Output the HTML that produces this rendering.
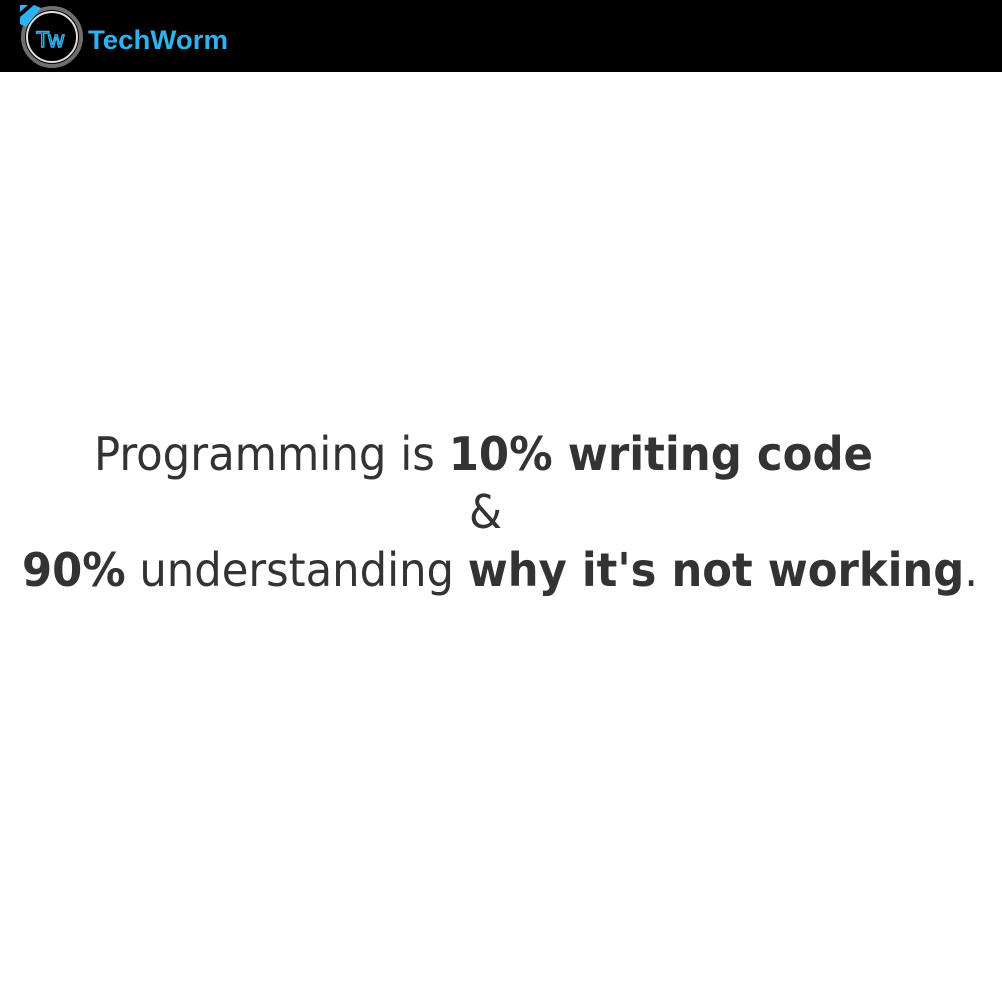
<!DOCTYPE html>
<html><head><meta charset="utf-8"><style>
html,body{margin:0;padding:0;background:#fff;width:1002px;height:1000px;overflow:hidden}
.hdr{position:absolute;left:0;top:0;width:1002px;height:72px;background:#000}
</style></head><body>
<div class="hdr">
<svg width="240" height="72" viewBox="0 0 240 72">
  <circle cx="52" cy="37" r="29" fill="none" stroke="#6f6f6f" stroke-width="4"/>
  <circle cx="52" cy="37" r="25" fill="none" stroke="#e0e0e0" stroke-width="2"/>
  <path d="M20 5 L28 5 L20 12 Z" fill="#2db4f0"/>
  <path d="M20 17 L34 5 L41 8 L26 27 L20 24 Z" fill="#2db4f0"/>
  <text x="36" y="47" font-family="Liberation Sans, sans-serif" font-size="22" fill="none" stroke="#2db4f0" stroke-width="1.4">Tw</text>
  <text x="88" y="49" font-family="Liberation Sans, sans-serif" font-weight="bold" font-size="27" fill="#2db4f0" textLength="140" lengthAdjust="spacingAndGlyphs">TechWorm</text>
</svg>
</div>
<svg style="position:absolute;left:0;top:0" width="1002" height="1000">
  <g font-family="DejaVu Sans Condensed, DejaVu Sans, sans-serif" font-size="46" fill="#333">
    <text x="94" y="470" textLength="779" lengthAdjust="spacingAndGlyphs">Programming is <tspan font-weight="bold">10% writing code</tspan></text>
    <text x="469" y="528" textLength="33" lengthAdjust="spacingAndGlyphs">&amp;</text>
    <text x="22" y="586" textLength="956" lengthAdjust="spacingAndGlyphs"><tspan font-weight="bold">90%</tspan> understanding <tspan font-weight="bold">why it's not working</tspan>.</text>
  </g>
</svg>
</body></html>
